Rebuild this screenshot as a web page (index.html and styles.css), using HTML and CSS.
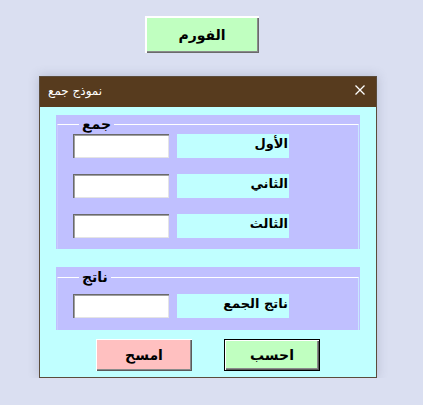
FILE: index.html
```html
<!DOCTYPE html>
<html lang="ar">
<head>
<meta charset="utf-8">
<title>الفورم</title>
<link rel="stylesheet" href="styles.css">
</head>
<body>
<div class="page">
  <button class="btn btn-main" dir="rtl">الفورم</button>
  <div class="window">
    <div class="titlebar">
      <span class="title" dir="rtl">نموذج جمع</span>
      <svg class="close" width="10" height="10" viewBox="0 0 10 10"><path d="M0.5 0.5 L9.5 9.5 M9.5 0.5 L0.5 9.5" stroke="#fff" stroke-width="1.3" fill="none"/></svg>
    </div>
    <div class="client">
      <div class="frame frame-sum">
        <fieldset class="group group-sum">
          <legend class="legend" dir="rtl">جمع</legend>
          <div class="row"><input class="textbox" type="text"><label class="label" dir="rtl">الأول</label></div>
          <div class="row"><input class="textbox" type="text"><label class="label" dir="rtl">الثاني</label></div>
          <div class="row"><input class="textbox" type="text"><label class="label" dir="rtl">الثالث</label></div>
        </fieldset>
      </div>
      <div class="frame frame-result">
        <fieldset class="group group-result">
          <legend class="legend legend-result" dir="rtl">ناتج</legend>
          <div class="row"><input class="textbox" type="text"><label class="label" dir="rtl">ناتج الجمع</label></div>
        </fieldset>
      </div>
      <div class="actions">
        <button class="btn btn-clear" dir="rtl">امسح</button>
        <button class="btn btn-calc" dir="rtl">احسب</button>
      </div>
    </div>
  </div>
</div>
</body>
</html>
```
FILE: styles.css
```css
html, body {
  margin: 0;
  padding: 0;
  background: #dadff1;
  font-family: "DejaVu Sans", "Noto Sans", sans-serif;
}
.page {
  display: flex;
  flex-direction: column;
  align-items: flex-start;
  padding-top: 16px;
}
.btn {
  font-family: "DejaVu Sans", sans-serif;
  font-weight: bold;
  font-size: 14px;
  color: #000;
  border: none;
  margin: 0;
  padding: 0;
  cursor: default;
  box-shadow: inset 1px 1px 0 #fff, inset -1px -1px 0 #5a5a5a, inset -2px -2px 0 #8a8a8a;
}
.btn-main {
  margin-left: 145px;
  width: 114px;
  height: 37px;
  background: #c0ffc0;
  box-shadow: inset 2px 2px 0 #fff, inset -1px -1px 0 #6a6a6a, inset -2px -2px 0 #8a8a8a;
}
.window {
  margin-top: 23px;
  margin-left: 39px;
  width: 336px;
  border: 1px solid #5a4c3c;
  box-shadow: 0 0 10px rgba(70, 80, 110, 0.25);
}
.titlebar {
  height: 30px;
  background: #573b1e;
  display: flex;
  align-items: center;
  justify-content: space-between;
  padding: 0 11px 0 8px;
}
.title {
  color: #fff;
  font-size: 12px;
  padding-bottom: 2px;
}
.close {
  display: block;
  margin-top: -4px;
}
.client {
  background: #c0ffff;
  height: 270px;
  padding: 8px 0 0 16px;
  box-sizing: border-box;
}
.frame {
  width: 304px;
  background: #c0c0ff;
  box-sizing: border-box;
  padding: 0 1px 0 1px;
  display: flex;
  flex-direction: column;
}
.frame-sum {
  height: 134px;
}
.frame-result {
  height: 63px;
  margin-top: 18px;
  padding-top: 1px;
}
.group {
  flex: 1;
  margin: 0;
  border: none;
  border-top: 1px solid #fff;
  border-left: 1px solid #cacaff;
  border-right: 1px solid #c8e6ff;
  min-width: 0;
  display: flex;
  flex-direction: column;
  gap: 16px;
  padding: 1px 0 0 15px;
}
.group-result {
  padding-top: 8px;
}
.legend {
  font-size: 14px;
  font-weight: bold;
  line-height: 18px;
  padding: 0 3px;
  margin-left: 6px;
}
.row {
  display: flex;
  gap: 8px;
  height: 24px;
}
.textbox {
  width: 96px;
  height: 24px;
  box-sizing: border-box;
  margin: 0;
  padding: 0;
  background: #fff;
  border: none;
  box-shadow: inset 1px 1px 0 #6a6a6a, inset 2px 2px 0 #a0a0a0, inset -1px -1px 0 #e4e4e4;
  outline: none;
}
.label {
  width: 112px;
  height: 24px;
  background: #c0ffff;
  font-size: 13px;
  font-weight: bold;
  line-height: 20px;
  text-align: right;
  padding-right: 1px;
  box-sizing: border-box;
}
.actions {
  display: flex;
  gap: 32px;
  margin-top: 9px;
  padding-left: 40px;
}
.btn-clear {
  width: 96px;
  height: 32px;
  background: #ffc0c0;
}
.btn-calc {
  width: 96px;
  height: 32px;
  background: #c0ffc0;
  border: 1px solid #000;
  box-shadow: inset 1px 1px 0 #fff, inset -1px -1px 0 #5a5a5a, inset -2px -2px 0 #8a8a8a;
}
```
